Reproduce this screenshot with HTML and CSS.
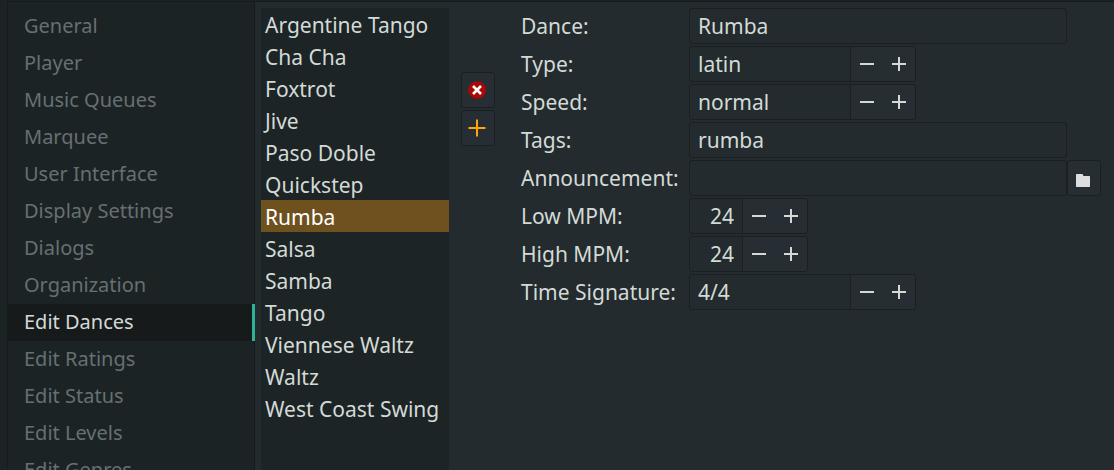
FILE: index.html
```html
<!DOCTYPE html>
<html lang="en">
<head>
<meta charset="utf-8">
<meta name="viewport" content="width=device-width, initial-scale=1">
<title>Edit Dances</title>
<link rel="stylesheet" href="styles.css">
</head>
<body>
<svg class="symbols" aria-hidden="true">
  <symbol id="minus" viewBox="0 0 14 14"><path d="M0 6h14v2H0z" fill="currentColor"/></symbol>
  <symbol id="plus" viewBox="0 0 14 14"><path d="M0 6h6V0h2v6h6v2H8v6H6V8H0z" fill="currentColor"/></symbol>
</svg>
<div class="window">
  <nav class="sidebar" aria-label="Configuration">
    <a class="tab" href="#general">General</a>
    <a class="tab" href="#player">Player</a>
    <a class="tab" href="#queues">Music Queues</a>
    <a class="tab" href="#marquee">Marquee</a>
    <a class="tab" href="#interface">User Interface</a>
    <a class="tab" href="#display">Display Settings</a>
    <a class="tab" href="#dialogs">Dialogs</a>
    <a class="tab" href="#organization">Organization</a>
    <a class="tab tab-active" href="#dances" aria-current="page">Edit Dances</a>
    <a class="tab" href="#ratings">Edit Ratings</a>
    <a class="tab" href="#status">Edit Status</a>
    <a class="tab" href="#levels">Edit Levels</a>
    <a class="tab" href="#genres">Edit Genres</a>
  </nav>
  <main class="page">
    <div class="dances" aria-label="Dances" role="group">
      <button class="dance" type="button">Argentine Tango</button>
      <button class="dance" type="button">Cha Cha</button>
      <button class="dance" type="button">Foxtrot</button>
      <button class="dance" type="button">Jive</button>
      <button class="dance" type="button">Paso Doble</button>
      <button class="dance" type="button">Quickstep</button>
      <button class="dance dance-selected" type="button" aria-pressed="true">Rumba</button>
      <button class="dance" type="button">Salsa</button>
      <button class="dance" type="button">Samba</button>
      <button class="dance" type="button">Tango</button>
      <button class="dance" type="button">Viennese Waltz</button>
      <button class="dance" type="button">Waltz</button>
      <button class="dance" type="button">West Coast Swing</button>
    </div>
    <div class="actions">
      <button class="icon-button" type="button" aria-label="Delete dance">
        <svg width="18" height="18" viewBox="0 0 18 18"><circle cx="9" cy="9" r="8.8" fill="#ac0606"/><path d="M5 5l8 8M13 5l-8 8" stroke="#fff" stroke-width="2.6"/></svg>
      </button>
      <button class="icon-button" type="button" aria-label="Add dance">
        <svg width="18" height="18" viewBox="0 0 18 18"><path d="M.5 9h17M9 .5v17" stroke="#ffa60c" stroke-width="2"/></svg>
      </button>
    </div>
    <form class="form">
      <div class="row">
        <label class="label" for="dance">Dance:</label>
        <input class="entry" id="dance" type="text" value="Rumba">
        <span class="end"></span>
      </div>
      <div class="row">
        <label class="label" for="type">Type:</label>
        <div class="spin">
          <input class="value" id="type" type="text" value="latin">
          <button class="step" type="button" aria-label="Previous type"><svg class="glyph"><use href="#minus"/></svg></button>
          <button class="step" type="button" aria-label="Next type"><svg class="glyph"><use href="#plus"/></svg></button>
        </div>
      </div>
      <div class="row">
        <label class="label" for="speed">Speed:</label>
        <div class="spin">
          <input class="value" id="speed" type="text" value="normal">
          <button class="step" type="button" aria-label="Previous speed"><svg class="glyph"><use href="#minus"/></svg></button>
          <button class="step" type="button" aria-label="Next speed"><svg class="glyph"><use href="#plus"/></svg></button>
        </div>
      </div>
      <div class="row">
        <label class="label" for="tags">Tags:</label>
        <input class="entry" id="tags" type="text" value="rumba">
        <span class="end"></span>
      </div>
      <div class="row">
        <label class="label" for="announcement">Announcement:</label>
        <input class="entry" id="announcement" type="text">
        <button class="icon-button end" type="button" aria-label="Choose announcement file">
          <svg width="14" height="18" viewBox="0 -5 14 18"><path d="M.5 0H6.500l1 2H13.500l.5.5V12.500l-.5.5H.5L0 12.500V.5z" fill="#dedede"/></svg>
        </button>
      </div>
      <div class="row">
        <label class="label" for="low">Low MPM:</label>
        <div class="spin">
          <input class="value value-number" id="low" type="text" inputmode="numeric" value="24">
          <button class="step" type="button" aria-label="Decrease low MPM"><svg class="glyph"><use href="#minus"/></svg></button>
          <button class="step" type="button" aria-label="Increase low MPM"><svg class="glyph"><use href="#plus"/></svg></button>
        </div>
      </div>
      <div class="row">
        <label class="label" for="high">High MPM:</label>
        <div class="spin">
          <input class="value value-number" id="high" type="text" inputmode="numeric" value="24">
          <button class="step" type="button" aria-label="Decrease high MPM"><svg class="glyph"><use href="#minus"/></svg></button>
          <button class="step" type="button" aria-label="Increase high MPM"><svg class="glyph"><use href="#plus"/></svg></button>
        </div>
      </div>
      <div class="row">
        <label class="label" for="signature">Time Signature:</label>
        <div class="spin">
          <input class="value" id="signature" type="text" value="4/4">
          <button class="step" type="button" aria-label="Previous time signature"><svg class="glyph"><use href="#minus"/></svg></button>
          <button class="step" type="button" aria-label="Next time signature"><svg class="glyph"><use href="#plus"/></svg></button>
        </div>
      </div>
    </form>
  </main>
</div>
</body>
</html>
```

FILE: styles.css
```css
* {
  box-sizing: border-box;
}

body {
  margin: 0;
  background: #1c2325;
  color: #d3dad6;
  font: 21px/30px "Noto Sans", sans-serif;
}

button,
input {
  margin: 0;
  padding: 0;
  border: 0;
  border-radius: 0;
  background: none;
  color: inherit;
  font: inherit;
}

.symbols {
  display: none;
}

.window {
  display: flex;
  height: 100vh;
  padding: 1px 0 0 7px;
  overflow: hidden;
}

.sidebar {
  flex: none;
  width: 248px;
  padding-top: 6px;
  border: 1px solid #161b1d;
  border-width: 1px 0 0 1px;
  background: #1c2325;
  box-shadow: inset -1px 0 #161b1d;
  overflow: hidden;
}

.tab {
  display: block;
  padding: 0 0 2px 16px;
  color: #667072;
  font-size: 20px;
  line-height: 35px;
  text-decoration: none;
}

.tab-active {
  border-right: 3px solid #2bb398;
  background: #161a1b;
  color: #d3dad6;
}

.page {
  display: flex;
  flex: 1;
  min-width: 0;
  padding: 6px 13px 0 6px;
  border-top: 1px solid #161b1d;
  background: #232b2e;
}

.dances {
  flex: none;
  width: 188px;
  background: #1d2426;
}

.dance {
  display: block;
  width: 100%;
  padding: 2px 0 0 4px;
  text-align: left;
  white-space: nowrap;
}

.dance-selected {
  background: #6e511f;
  color: #fff;
}

.actions {
  display: flex;
  flex: none;
  flex-direction: column;
  gap: 2px;
  padding: 64px 26px 0 12px;
}

.icon-button {
  display: flex;
  align-items: center;
  justify-content: center;
  width: 34px;
  height: 36px;
  padding-right: 2px;
  border: 1px solid #1a2022;
  border-radius: 3px;
  background: #272e33;
}

.form {
  display: flex;
  flex: 1;
  flex-direction: column;
  gap: 2px;
  min-width: 0;
}

.row {
  display: flex;
  height: 36px;
}

.label {
  flex: none;
  width: 168px;
  line-height: 36px;
}

.entry {
  flex: 1;
  min-width: 0;
  padding: 0 8px;
  border: 1px solid #1a2022;
  border-radius: 3px;
}

.end {
  flex: none;
  width: 34px;
}

.spin {
  display: flex;
  border: 1px solid #1a2022;
  border-radius: 3px;
  background: #272e33;
  overflow: hidden;
}

.value {
  width: 161px;
  padding: 0 8px;
  border-right: 1px solid #1a2022;
  background: #232b2e;
}

.value-number {
  width: 53px;
  text-align: right;
}

.step {
  display: flex;
  align-items: center;
  justify-content: center;
  width: 32px;
}

.glyph {
  width: 14px;
  height: 14px;
}
```
